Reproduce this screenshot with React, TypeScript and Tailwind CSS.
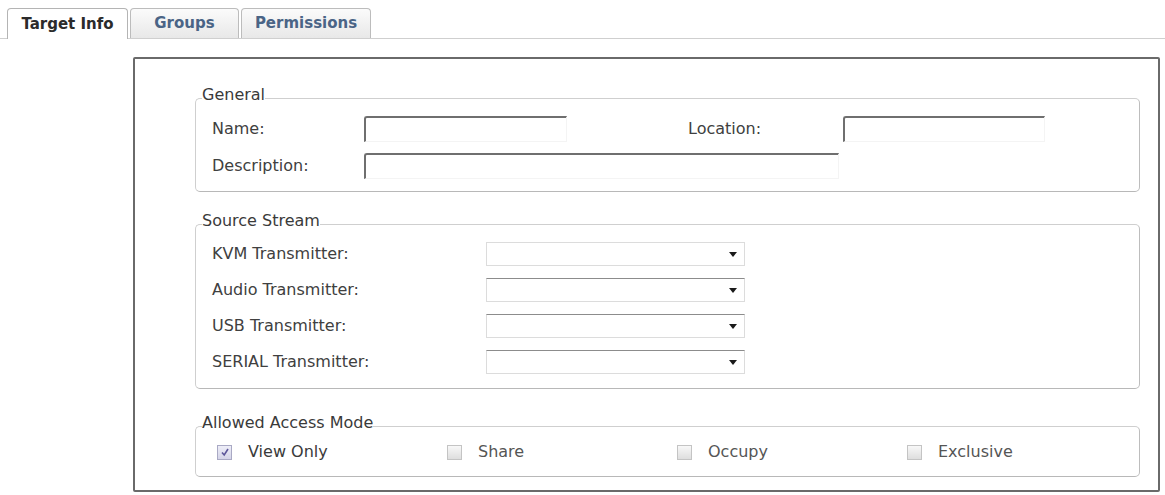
import React from "react";

const font = { fontFamily: '"DejaVu Sans", Verdana, sans-serif' };

function Tab({ label, active }: { label: string; active?: boolean }) {
  if (active) {
    return (
      <div className="-mb-px flex h-[31px] w-[121px] items-center justify-center rounded-t-[4px] border border-b-0 border-[#b4b4b4] bg-white text-[15px] font-bold text-[#2b2b2b]">
        {label}
      </div>
    );
  }
  return (
    <div
      className="flex h-[30px] items-center justify-center rounded-t-[4px] border border-b-0 border-[#bcbcbc] bg-gradient-to-b from-[#fbfbfb] to-[#e8e8e8] text-[15px] font-bold text-[#4a6486]"
      style={{ width: label === "Groups" ? 109 : 130 }}
    >
      {label}
    </div>
  );
}

function TextInput({ width }: { width: number }) {
  return (
    <div
      className="h-[26px] rounded-tl-[3px] border-t-[2px] border-l-[2px] border-r border-b border-t-[#6f6f6f] border-l-[#6f6f6f] border-r-[#f4f4f4] border-b-[#f4f4f4] bg-white"
      style={{ width }}
    />
  );
}

function Select({ darkTop }: { darkTop?: boolean }) {
  return (
    <div
      className={
        "flex h-[24px] w-[259px] items-center justify-end border border-[#dcdcdc] bg-white pr-[7px] " +
        (darkTop ? "border-t-[#8c8c8c]" : "")
      }
    >
      <svg width="8" height="5" viewBox="0 0 8 5">
        <path d="M0 0 L8 0 L4 5 Z" fill="#1a1a1a" />
      </svg>
    </div>
  );
}

function Check({ checked, label }: { checked?: boolean; label: string }) {
  return (
    <div className="flex w-[230px] items-center">
      <div
        className={
          "flex h-[15px] w-[15px] items-center justify-center border " +
          (checked
            ? "border-[#a9a9c4] bg-gradient-to-b from-[#eeeef8] to-[#d4d4e8]"
            : "border-[#c4c4c4] bg-gradient-to-b from-[#f8f8f8] to-[#dedede]")
        }
      >
        {checked && (
          <svg width="10" height="10" viewBox="0 0 10 10">
            <path d="M2 5.5 L4.2 8 L8 2" stroke="#5d579a" strokeWidth="1.6" fill="none" />
          </svg>
        )}
      </div>
      <span className={"ml-[16px] text-[16px] " + (checked ? "text-[#3a3a3a]" : "text-[#555]")}>{label}</span>
    </div>
  );
}

function Group({ title, children, className }: { title: string; children: React.ReactNode; className?: string }) {
  return (
    <fieldset
      className={
        "w-[945px] rounded-[5px] border border-[#cfcfcf] border-b-[#b8b8b8] border-r-[#bdbdbd] pl-[6px] " + (className || "")
      }
    >
      <legend className="pb-[6px] text-[16px] leading-[18px] text-[#3a3a3a]">{title}</legend>
      {children}
    </fieldset>
  );
}

export default function App() {
  return (
    <div className="h-[495px] w-[1165px] overflow-hidden bg-white text-[#404040]" style={font}>
      <div className="flex items-end gap-[2px] border-b border-[#cfcfcf] pl-[7px] pt-[8px]">
        <Tab label="Target Info" active />
        <Tab label="Groups" />
        <Tab label="Permissions" />
      </div>

      <div className="ml-[133px] mt-[18px] h-[435px] w-[1027px] rounded-[2px] border-2 border-[#6a6a6a] pl-[60px] pt-[27px]">
        <Group title="General" className="pb-[12px]">
          <div className="pl-[10px]">
            <div className="mt-[6px] flex h-[26px] items-center">
              <span className="w-[152px] text-[16px]">Name:</span>
              <TextInput width={203} />
              <span className="ml-[121px] w-[155px] text-[16px]">Location:</span>
              <TextInput width={202} />
            </div>
            <div className="mt-[11px] flex h-[26px] items-center">
              <span className="w-[152px] text-[16px]">Description:</span>
              <TextInput width={475} />
            </div>
          </div>
        </Group>

        <Group title="Source Stream" className="mt-[20px] pb-[14px]">
          <div className="flex flex-col gap-[12px] pl-[10px] pt-[6px]">
            {["KVM Transmitter:", "Audio Transmitter:", "USB Transmitter:", "SERIAL Transmitter:"].map((l, i) => (
              <div key={l} className="flex h-[24px] items-center">
                <span className="w-[274px] text-[16px]">{l}</span>
                <Select darkTop={i > 0} />
              </div>
            ))}
          </div>
        </Group>

        <Group title="Allowed Access Mode" className="mt-[25px] pb-[16px]">
          <div className="mt-[6px] flex h-[16px] items-center pl-[15px]">
            <Check checked label="View Only" />
            <Check label="Share" />
            <Check label="Occupy" />
            <Check label="Exclusive" />
          </div>
        </Group>
      </div>
    </div>
  );
}
